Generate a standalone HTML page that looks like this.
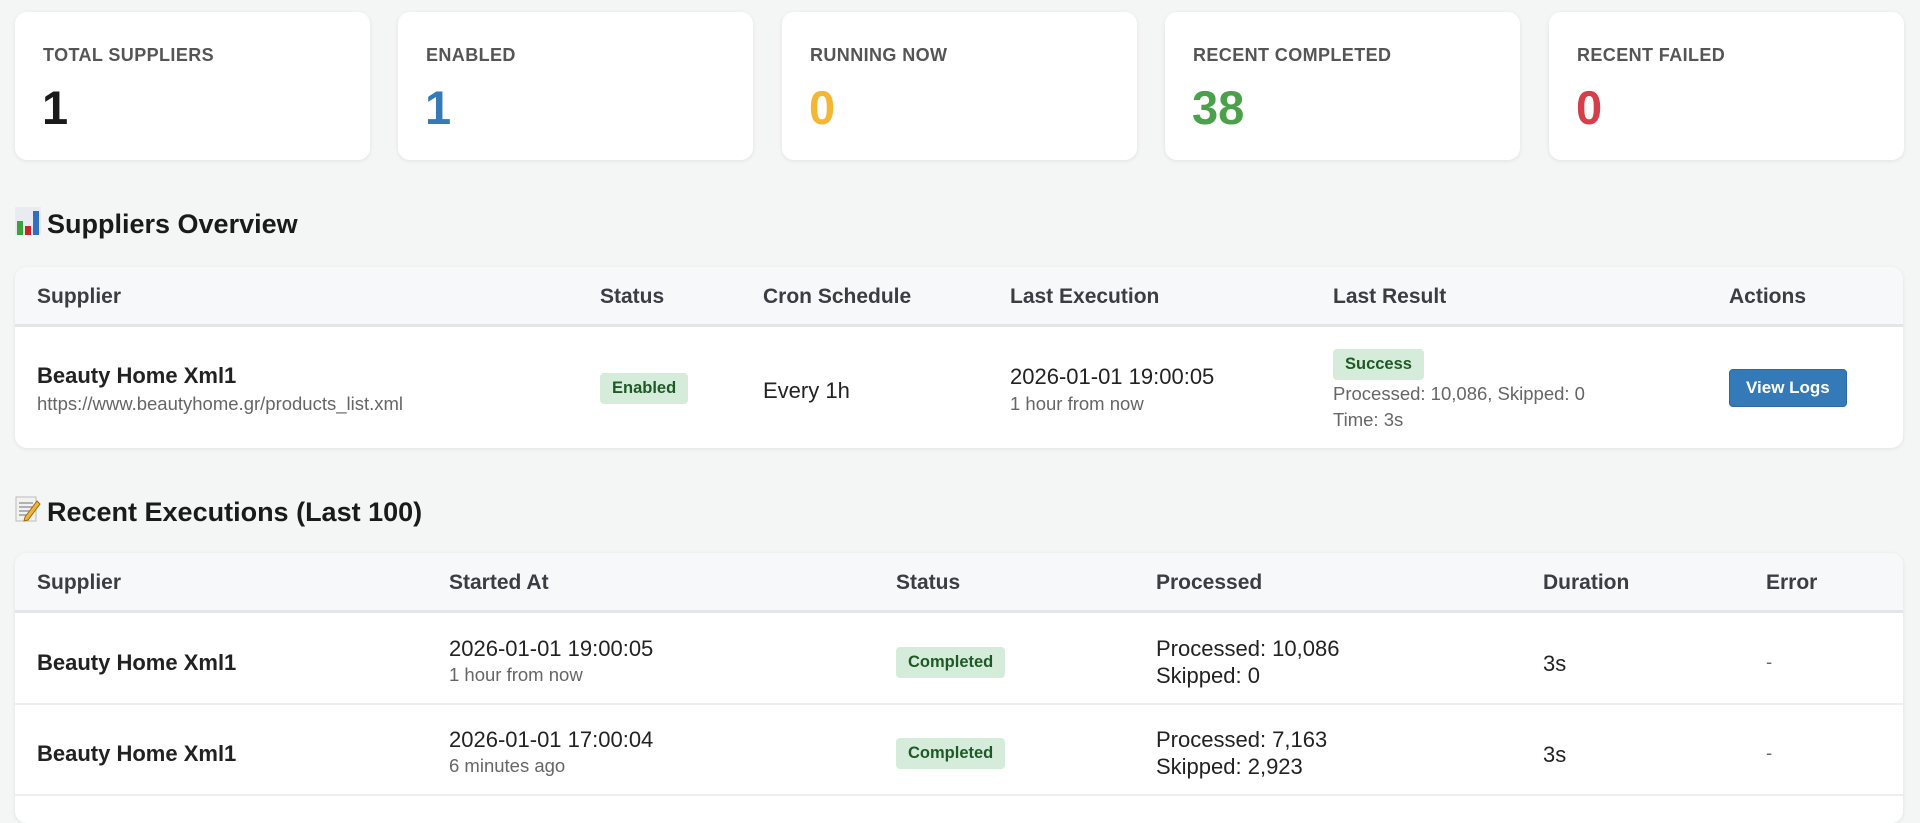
<!DOCTYPE html>
<html><head><meta charset="utf-8"><style>
*{box-sizing:border-box;margin:0;padding:0}
body{width:1920px;height:813px;overflow:hidden;background:#f4f5f5;font-family:"Liberation Sans",Arial,sans-serif;color:#222;position:relative}
.card{position:absolute;top:12px;width:355px;height:148px;background:#fff;border-radius:12px;box-shadow:0 1px 4px rgba(0,0,0,.08)}
.card .l{position:absolute;left:28px;top:33px;font-size:18px;font-weight:bold;color:#555;letter-spacing:.4px}
.card .n{position:absolute;left:27px;top:71px;font-size:47px;font-weight:bold;line-height:50px}
h2{position:absolute;left:15px;font-size:27px;font-weight:bold;color:#1a1a1a}
.tbl{position:absolute;left:15px;width:1888px;background:#fff;border-radius:12px;box-shadow:0 1px 4px rgba(0,0,0,.08);overflow:hidden}
.hd{position:relative;height:60px;background:#f7f8f9;border-bottom:3px solid #e3e5e8}
.hd span{position:absolute;top:18px;font-size:21px;font-weight:bold;color:#3a3d42}
.row{position:relative;border-bottom:2px solid #eceef0}
.row > *{position:absolute}
.t{font-size:22px;color:#222}
.s{font-size:18.5px;color:#666}
.b{font-size:22px;font-weight:bold;color:#222}
.badge{background:#d6ecda;color:#1d5a26;font-size:16.5px;font-weight:bold;border-radius:4px;padding:6px 12px}
.btn{background:#3479b8;color:#fff;font-size:17px;font-weight:bold;border-radius:4px;padding:8px 16px;border:1px solid #2c6aa3}
.bar{display:inline-block;vertical-align:-2px;margin-right:6px}
</style></head><body>
<div class="card" style="left:15px"><div class="l">TOTAL SUPPLIERS</div><div class="n" style="color:#1a1a1a">1</div></div>
<div class="card" style="left:398px"><div class="l">ENABLED</div><div class="n" style="color:#3579b6">1</div></div>
<div class="card" style="left:782px"><div class="l">RUNNING NOW</div><div class="n" style="color:#f4b733">0</div></div>
<div class="card" style="left:1165px"><div class="l">RECENT COMPLETED</div><div class="n" style="color:#4ba149">38</div></div>
<div class="card" style="left:1549px"><div class="l">RECENT FAILED</div><div class="n" style="color:#d43f49">0</div></div>

<h2 style="top:207px"><svg class="bar" width="26" height="28" viewBox="0 0 26 28"><rect x="0" y="0" width="26" height="28" fill="#e8ecf0"/><rect x="2" y="14" width="6" height="14" fill="#3aa33a"/><rect x="10" y="19" width="6" height="9" fill="#c62828"/><rect x="18" y="4" width="6" height="24" fill="#2f6fc4"/></svg>Suppliers Overview</h2>
<div class="tbl" style="top:267px;height:181px">
 <div class="hd"><span style="left:22px">Supplier</span><span style="left:585px">Status</span><span style="left:748px">Cron Schedule</span><span style="left:995px">Last Execution</span><span style="left:1318px">Last Result</span><span style="left:1714px">Actions</span></div>
 <div class="row" style="height:118px;border:none">
  <div class="b" style="left:22px;top:36px">Beauty Home Xml1</div>
  <div class="s" style="left:22px;top:66px">https://www.beautyhome.gr/products_list.xml</div>
  <div class="badge" style="left:585px;top:46px">Enabled</div>
  <div class="t" style="left:748px;top:51px">Every 1h</div>
  <div class="t" style="left:995px;top:37px">2026-01-01 19:00:05</div>
  <div class="s" style="left:995px;top:66px">1 hour from now</div>
  <div class="badge" style="left:1318px;top:22px">Success</div>
  <div class="s" style="left:1318px;top:56px">Processed: 10,086, Skipped: 0</div>
  <div class="s" style="left:1318px;top:82px">Time: 3s</div>
  <div class="btn" style="left:1714px;top:42px">View Logs</div>
 </div>
</div>

<h2 style="top:495px"><svg class="bar" width="26" height="28" viewBox="0 0 26 28"><rect x="1" y="2" width="20" height="24" fill="#f3f3ee" stroke="#bbb"/><path d="M4 8h14M4 12h14M4 16h10M4 20h8" stroke="#99a" stroke-width="1.5"/><path d="M10 22 L22 6 L25 9 L13 25 L9 26Z" fill="#f0b43a" stroke="#a06a10"/></svg>Recent Executions (Last 100)</h2>
<div class="tbl" style="top:553px;height:270px">
 <div class="hd"><span style="left:22px">Supplier</span><span style="left:434px">Started At</span><span style="left:881px">Status</span><span style="left:1141px">Processed</span><span style="left:1528px">Duration</span><span style="left:1751px">Error</span></div>
 <div class="row" style="height:92px">
  <div class="b" style="left:22px;top:37px">Beauty Home Xml1</div>
  <div class="t" style="left:434px;top:23px">2026-01-01 19:00:05</div>
  <div class="s" style="left:434px;top:51px">1 hour from now</div>
  <div class="badge" style="left:881px;top:34px">Completed</div>
  <div class="t" style="left:1141px;top:23px">Processed: 10,086</div>
  <div class="t" style="left:1141px;top:50px">Skipped: 0</div>
  <div class="t" style="left:1528px;top:38px">3s</div>
  <div class="s" style="left:1751px;top:38px">-</div>
 </div>
 <div class="row" style="height:91px">
  <div class="b" style="left:22px;top:36px">Beauty Home Xml1</div>
  <div class="t" style="left:434px;top:22px">2026-01-01 17:00:04</div>
  <div class="s" style="left:434px;top:50px">6 minutes ago</div>
  <div class="badge" style="left:881px;top:33px">Completed</div>
  <div class="t" style="left:1141px;top:22px">Processed: 7,163</div>
  <div class="t" style="left:1141px;top:49px">Skipped: 2,923</div>
  <div class="t" style="left:1528px;top:37px">3s</div>
  <div class="s" style="left:1751px;top:37px">-</div>
 </div>
</div>
</body></html>
